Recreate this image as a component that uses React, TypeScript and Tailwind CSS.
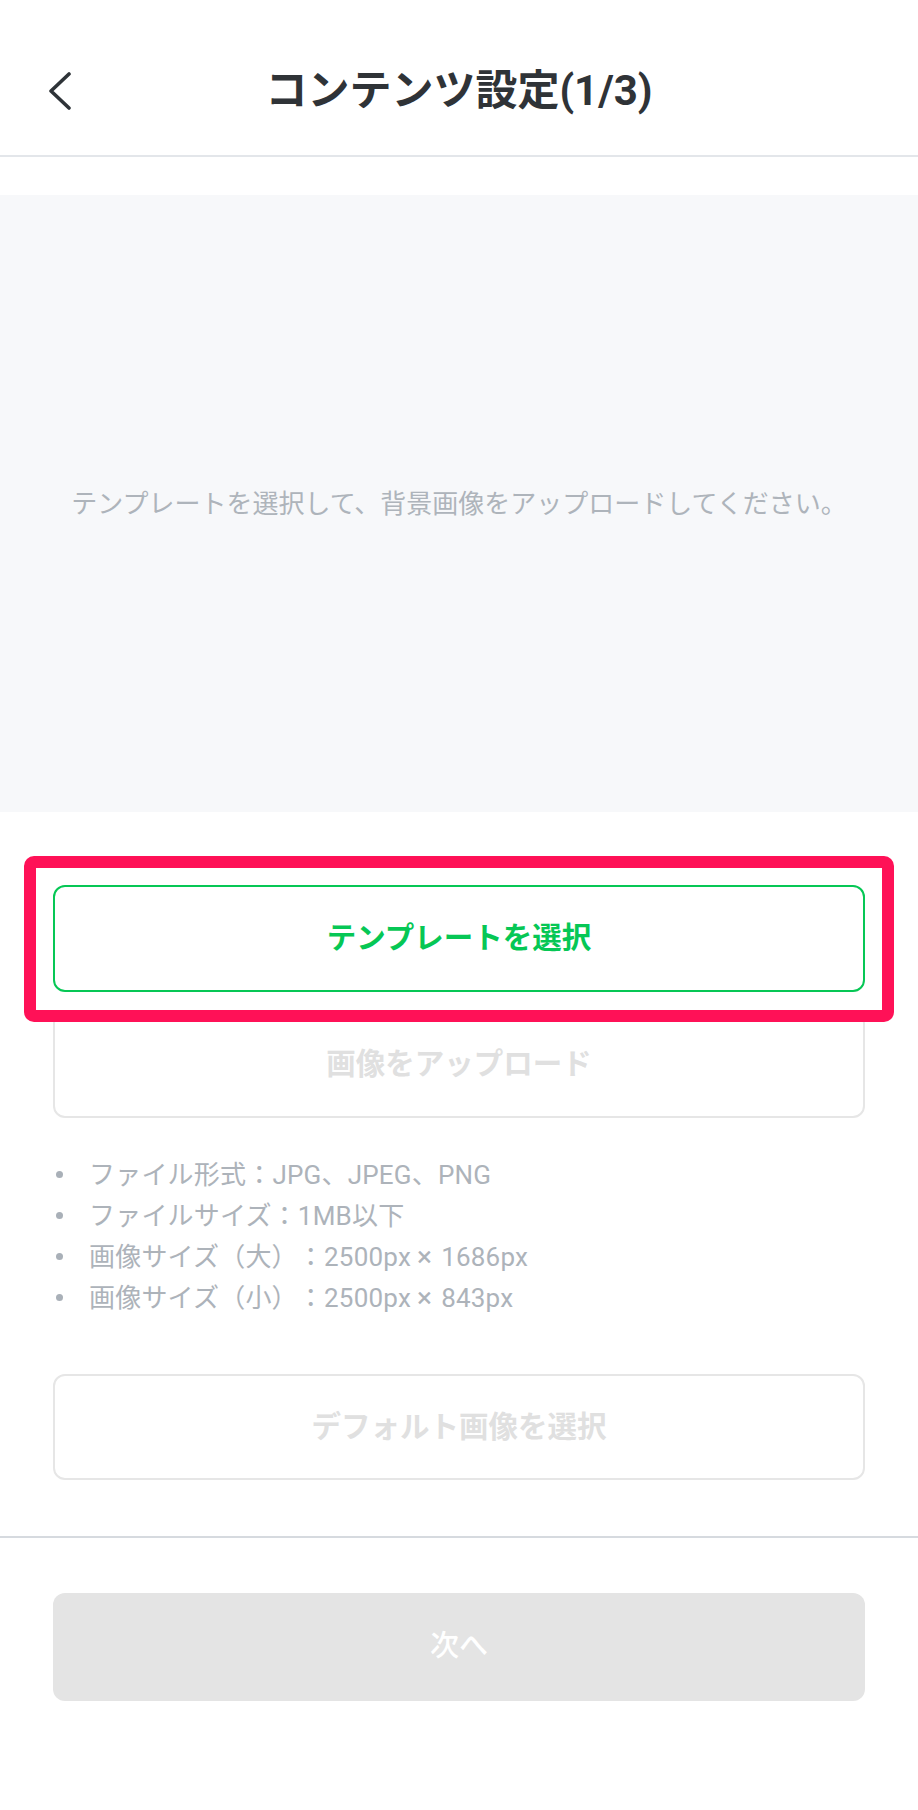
const specs: [string, string?][] = [
  ["ファイル形式：JPG、JPEG、PNG"],
  ["ファイルサイズ：1MB以下"],
  ["画像サイズ（大）：2500px", "1686px"],
  ["画像サイズ（小）：2500px", "843px"],
];

export default function App() {
  return (
    <div className="min-h-screen w-full bg-white font-['Roboto','Noto_Sans_CJK_JP',sans-serif] text-[#2f3337] [text-spacing-trim:space-all]">
      {/* Header */}
      <header className="grid h-[157px] grid-cols-[1fr_auto_1fr] items-center border-b-2 border-[#e3e6ea] pt-[26px]">
        <div className="flex items-center pl-[48px]">
          <svg width="24" height="38" viewBox="0 0 24 38" fill="none" className="text-[#2e3338]">
            <polyline
              points="21,2 3,19 21,36"
              stroke="currentColor"
              strokeWidth="3.6"
              strokeLinecap="round"
              strokeLinejoin="round"
            />
          </svg>
        </div>
        <h1 className="text-[42px] font-bold leading-none">コンテンツ設定(1/3)</h1>
        <div />
      </header>

      {/* Preview */}
      <div className="mt-[38px] flex h-[617px] items-center justify-center bg-[#f7f8fa]">
        <p className="text-[26px] leading-none text-[#aeb4bb]">
          テンプレートを選択して、背景画像をアップロードしてください。
        </p>
      </div>

      {/* Buttons */}
      <div className="mt-[73px] flex flex-col gap-[19px] px-[53px]">
        <div className="relative">
          <button className="flex h-[107px] w-full items-center justify-center rounded-[12px] border-2 border-[#06c755] bg-white text-[29.5px] font-bold text-[#06c755]">
            テンプレートを選択
          </button>
          <div className="pointer-events-none absolute -top-[29px] -right-[29px] -bottom-[30px] -left-[29px] z-10 rounded-[10px] border-[12px] border-[#ff1157]" />
        </div>
        <button className="flex h-[107px] w-full items-center justify-center rounded-[12px] border-2 border-[#e6e6e6] bg-white text-[29.5px] font-bold text-[#e0e0e0]">
          画像をアップロード
        </button>
      </div>

      <ul className="mt-[36px] flex flex-col pl-[56px]">
        {specs.map(([a, b]) => (
          <li key={a} className="flex h-[41px] items-center gap-[26px] text-[26px] text-[#adb3ba]">
            <span className="h-[7px] w-[7px] shrink-0 rounded-full bg-[#a9b0b8]" />
            <span className="leading-none tracking-[0.2px]">
              {a}
              {b && (
                <>
                  <span className="ml-[6px] mr-[9px] text-[28px]">×</span>
                  {b}
                </>
              )}
            </span>
          </li>
        ))}
      </ul>

      <div className="mt-[56px] px-[53px]">
        <button className="flex h-[106px] w-full items-center justify-center rounded-[12px] border-2 border-[#e6e6e6] bg-white text-[29.5px] font-bold text-[#e0e0e0]">
          デフォルト画像を選択
        </button>
      </div>

      {/* Footer */}
      <div className="mt-[56px] border-t-2 border-[#d6dadf] px-[53px] pt-[55px] pb-[108px]">
        <button className="flex h-[108px] w-full items-center justify-center rounded-[12px] bg-[#e4e4e4] text-[29px] font-medium text-white">
          次へ
        </button>
      </div>
    </div>
  );
}
